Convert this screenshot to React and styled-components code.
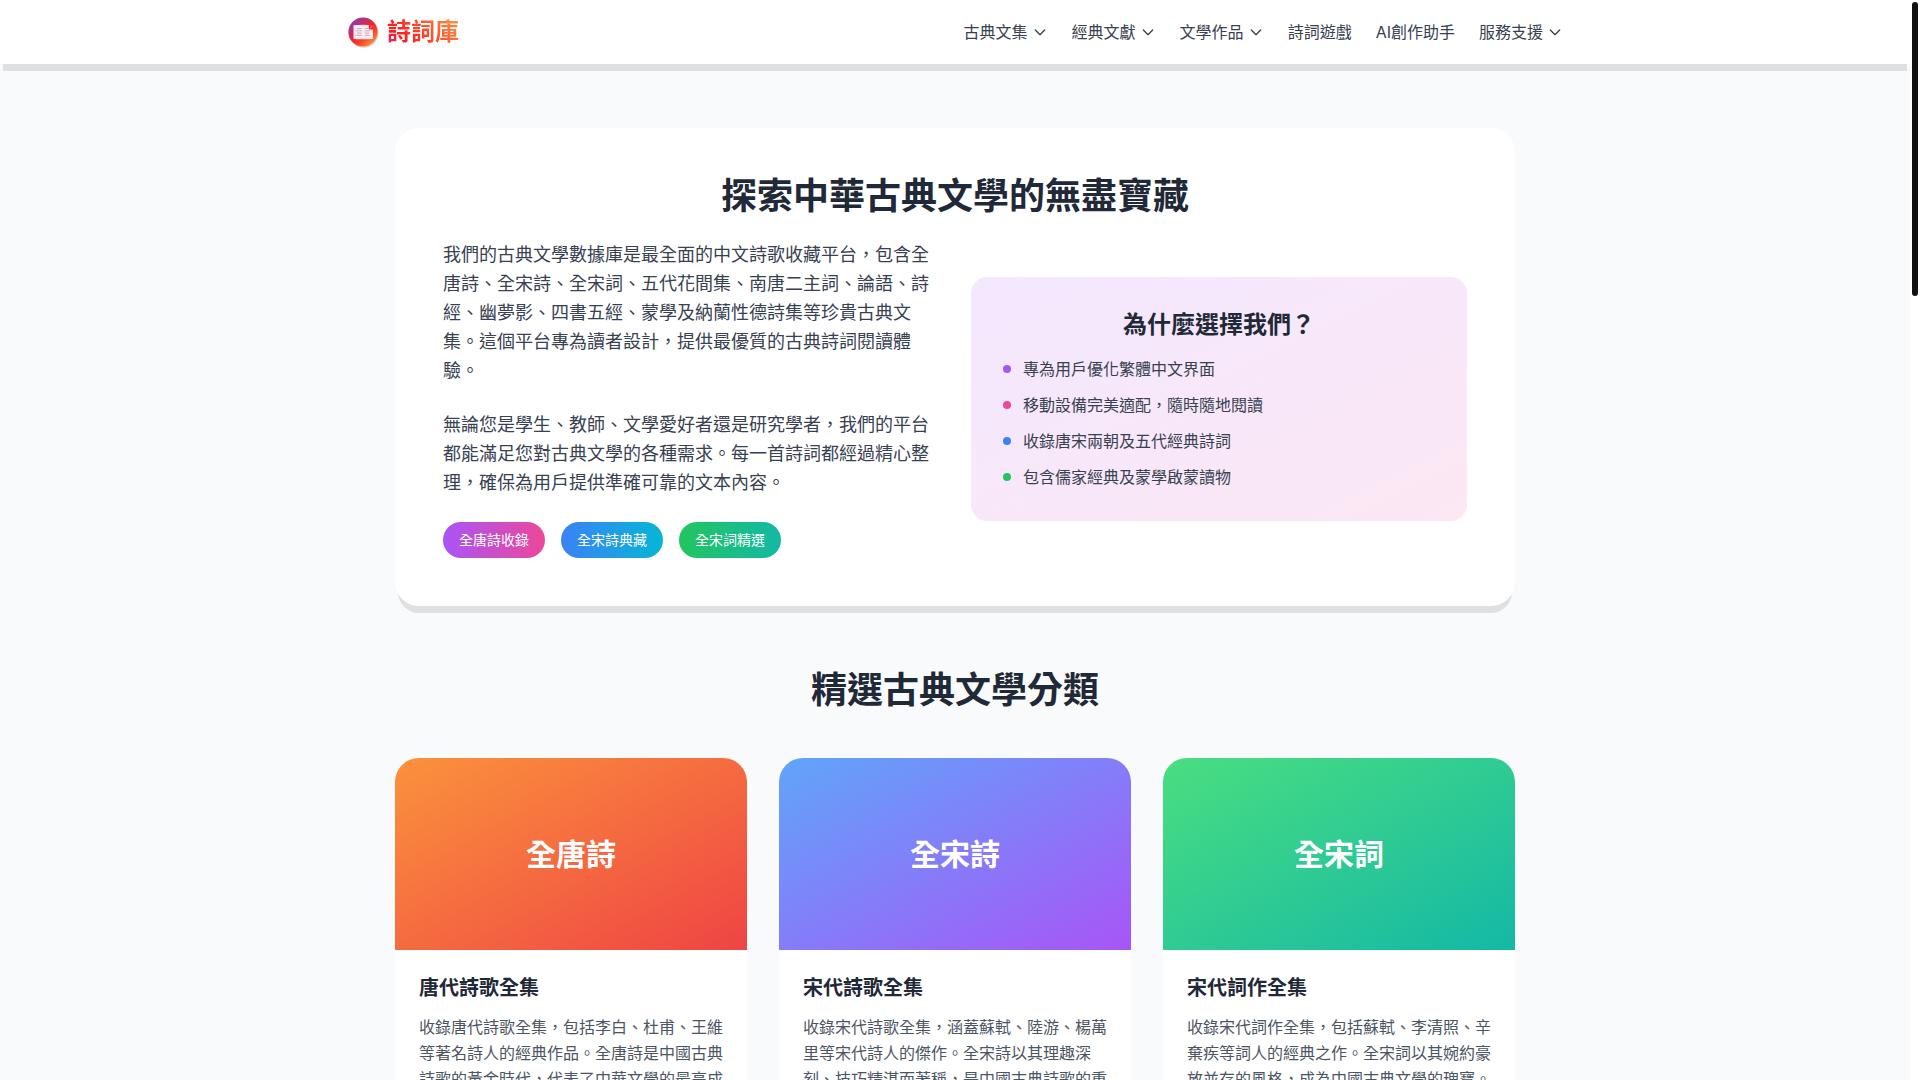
import React, { Fragment } from "react";
import styled, { createGlobalStyle } from "styled-components";

const GlobalStyle = createGlobalStyle`
  * {
    box-sizing: border-box;
    margin: 0;
    padding: 0;
  }

  body {
    background: #ffffff;
    color: #1f2937;
    font-family: Inter, "Noto Sans CJK TC", sans-serif;
    font-size: 16px;
    line-height: 24px;
  }

  ul {
    list-style: none;
  }
`;

const Shell = styled.div`
  display: flex;
  height: 100vh;
  overflow: hidden;
`;

const Page = styled.div`
  flex: 1;
  min-width: 0;
  overflow: hidden;
  background: #f9fafb;
`;

const ScrollTrack = styled.div`
  flex: none;
  width: 10px;
  padding: 2px;
  background: #ffffff;
`;

const ScrollThumb = styled.div`
  width: 6px;
  height: 294px;
  border-radius: 3px;
  background: #111111;
`;

const Header = styled.header`
  background: #ffffff;
  box-shadow: 0 10px 0 -3px rgba(0, 0, 0, 0.1);
`;

const HeaderInner = styled.div`
  display: flex;
  align-items: center;
  justify-content: space-between;
  max-width: 1280px;
  height: 64px;
  margin: 0 auto;
  padding: 0 32px;
`;

const Brand = styled.a`
  display: flex;
  align-items: center;
  gap: 8px;
  text-decoration: none;
`;

const BrandName = styled.span`
  font-size: 24px;
  line-height: 32px;
  font-weight: 700;
  color: transparent;
  background: linear-gradient(45deg, #c13584, #fd1d1d 25%, #ff9a44);
  background-clip: text;
  -webkit-background-clip: text;
`;

const Nav = styled.nav`
  display: flex;
  align-items: center;
  gap: 24px;
`;

const NavLink = styled.a`
  color: #374151;
  text-decoration: none;
`;

const NavButton = styled.button`
  display: flex;
  align-items: center;
  gap: 4px;
  border: 0;
  background: none;
  color: #374151;
  font: inherit;
  cursor: pointer;
`;

const Main = styled.main`
  max-width: 1184px;
  margin: 0 auto;
  padding: 64px 32px;
`;

const Hero = styled.section`
  padding: 48px;
  margin-bottom: 64px;
  border-radius: 24px;
  background: #ffffff;
  box-shadow: 0 10px 0 -3px rgba(0, 0, 0, 0.1);
`;

const Heading = styled.h2`
  margin-bottom: ${(props) => props.$gap};
  font-size: 36px;
  line-height: 40px;
  font-weight: 700;
  text-align: center;
`;

const HeroColumns = styled.div`
  display: grid;
  grid-template-columns: 1fr 1fr;
  align-items: center;
  gap: 32px;
`;

const Paragraph = styled.p`
  margin-bottom: 25px;
  color: #374151;
  font-size: 18px;
  line-height: 29px;
`;

const Tags = styled.div`
  display: flex;
  flex-wrap: wrap;
  gap: 16px;
`;

const Tag = styled.span`
  padding: 8px 16px;
  border-radius: 18px;
  background: linear-gradient(to right, ${(props) => props.$from}, ${(props) => props.$to});
  color: #ffffff;
  font-size: 14px;
  line-height: 20px;
`;

const Reasons = styled.div`
  padding: 32px;
  border-radius: 16px;
  background: linear-gradient(to bottom right, #f3e8ff, #fce7f3);
`;

const ReasonsTitle = styled.h3`
  margin-bottom: 16px;
  font-size: 24px;
  line-height: 32px;
  font-weight: 700;
  text-align: center;
`;

const ReasonList = styled.ul`
  display: grid;
  gap: 12px;
`;

const Reason = styled.li`
  display: flex;
  align-items: center;
  gap: 12px;
  color: #374151;

  &::before {
    content: "";
    width: 8px;
    height: 8px;
    border-radius: 50%;
    background: ${(props) => props.$dot};
  }
`;

const CardGrid = styled.div`
  display: grid;
  grid-template-columns: repeat(3, 1fr);
  gap: 32px;
`;

const Card = styled.article`
  overflow: hidden;
  border-radius: 24px;
  background: #ffffff;
  box-shadow: 0 10px 0 -3px rgba(0, 0, 0, 0.1);
`;

const CardCover = styled.div`
  display: flex;
  align-items: center;
  justify-content: center;
  height: 192px;
  background: linear-gradient(to bottom right, ${(props) => props.$from}, ${(props) => props.$to});
  color: #ffffff;
  font-size: 30px;
  line-height: 36px;
  font-weight: 700;
`;

const CardBody = styled.div`
  padding: 24px;
`;

const CardTitle = styled.h3`
  margin-bottom: 12px;
  font-size: 20px;
  line-height: 28px;
  font-weight: 700;
`;

const CardText = styled.p`
  color: #4b5563;
  line-height: 26px;
`;

const navItems = [
  { label: "古典文集", menu: true },
  { label: "經典文獻", menu: true },
  { label: "文學作品", menu: true },
  { label: "詩詞遊戲" },
  { label: "AI創作助手" },
  { label: "服務支援", menu: true },
];

const tags = [
  { label: "全唐詩收錄", from: "#a855f7", to: "#ec4899" },
  { label: "全宋詩典藏", from: "#3b82f6", to: "#06b6d4" },
  { label: "全宋詞精選", from: "#22c55e", to: "#14b8a6" },
];

const reasons = [
  { label: "專為用戶優化繁體中文界面", dot: "#a855f7" },
  { label: "移動設備完美適配，隨時隨地閱讀", dot: "#ec4899" },
  { label: "收錄唐宋兩朝及五代經典詩詞", dot: "#3b82f6" },
  { label: "包含儒家經典及蒙學啟蒙讀物", dot: "#22c55e" },
];

const categories = [
  {
    name: "全唐詩",
    title: "唐代詩歌全集",
    text: "收錄唐代詩歌全集，包括李白、杜甫、王維等著名詩人的經典作品。全唐詩是中國古典詩歌的黃金時代，代表了中華文學的最高成就。",
    from: "#fb923c",
    to: "#ef4444",
  },
  {
    name: "全宋詩",
    title: "宋代詩歌全集",
    text: "收錄宋代詩歌全集，涵蓋蘇軾、陸游、楊萬里等宋代詩人的傑作。全宋詩以其理趣深刻、技巧精湛而著稱，是中國古典詩歌的重要組成部分。",
    from: "#60a5fa",
    to: "#a855f7",
  },
  {
    name: "全宋詞",
    title: "宋代詞作全集",
    text: "收錄宋代詞作全集，包括蘇軾、李清照、辛棄疾等詞人的經典之作。全宋詞以其婉約豪放並存的風格，成為中國古典文學的瑰寶。",
    from: "#4ade80",
    to: "#14b8a6",
  },
];

function Chevron() {
  return (
    <svg width="16" height="16" viewBox="0 0 24 24" fill="none" aria-hidden="true">
      <path
        d="M19 9l-7 7-7-7"
        stroke="currentColor"
        strokeWidth="2"
        strokeLinecap="round"
        strokeLinejoin="round"
      />
    </svg>
  );
}

// open book on a round gradient badge, with a small seal in the corner
function Logo() {
  return (
    <svg width="32" height="32" viewBox="0 0 32 32" aria-hidden="true">
      <defs>
        <linearGradient id="badge" x1="0.15" y1="0.1" x2="0.85" y2="0.95">
          <stop offset="0" stopColor="#8a3ab0" />
          <stop offset="0.45" stopColor="#ee2335" />
          <stop offset="0.65" stopColor="#fb3a22" />
          <stop offset="1" stopColor="#ff9a3c" />
        </linearGradient>
      </defs>
      <circle cx="16.6" cy="16.8" r="15" fill="#000000" opacity="0.16" />
      <circle cx="16" cy="16" r="14.6" fill="url(#badge)" />
      <path
        d="M6.5 9.2Q16 8.400 26 9.200V23Q16 23.600 6.500 23Z"
        fill="#fdeaf0"
      />
      <path
        d="M10 12.500h4.500M8.700 14.800h6M10 17.100h4.500M8.700 19.400h6M18 12.500h3.500M17.700 14.800h5.300M18 17.100h4M17.700 19.400h5.300"
        stroke="#b3a5ac"
        strokeWidth="0.800"
      />
      <rect x="21.700" y="9" width="5" height="4.400" rx="1" fill="#f3263c" />
      <path d="M23.200 12.200l2-2" stroke="#ffd0d0" strokeWidth="0.800" />
    </svg>
  );
}

function App() {
  return (
    <Fragment>
      <GlobalStyle />
      <Shell>
        <Page>
          <Header>
            <HeaderInner>
              <Brand href="#">
                <Logo />
                <BrandName>詩詞庫</BrandName>
              </Brand>
              <Nav>
                {navItems.map(({ label, menu }) =>
                  menu ? (
                    <NavButton key={label} type="button">
                      {label}
                      <Chevron />
                    </NavButton>
                  ) : (
                    <NavLink key={label} href="#">
                      {label}
                    </NavLink>
                  )
                )}
              </Nav>
            </HeaderInner>
          </Header>

          <Main>
            <Hero>
              <Heading $gap="24px">探索中華古典文學的無盡寶藏</Heading>
              <HeroColumns>
                <div>
                  <Paragraph>
                    我們的古典文學數據庫是最全面的中文詩歌收藏平台，包含全唐詩、全宋詩、全宋詞、五代花間集、南唐二主詞、論語、詩經、幽夢影、四書五經、蒙學及納蘭性德詩集等珍貴古典文集。這個平台專為讀者設計，提供最優質的古典詩詞閱讀體驗。
                  </Paragraph>
                  <Paragraph>
                    無論您是學生、教師、文學愛好者還是研究學者，我們的平台都能滿足您對古典文學的各種需求。每一首詩詞都經過精心整理，確保為用戶提供準確可靠的文本內容。
                  </Paragraph>
                  <Tags>
                    {tags.map((tag) => (
                      <Tag key={tag.label} $from={tag.from} $to={tag.to}>
                        {tag.label}
                      </Tag>
                    ))}
                  </Tags>
                </div>
                <Reasons>
                  <ReasonsTitle>為什麼選擇我們？</ReasonsTitle>
                  <ReasonList>
                    {reasons.map((reason) => (
                      <Reason key={reason.label} $dot={reason.dot}>
                        {reason.label}
                      </Reason>
                    ))}
                  </ReasonList>
                </Reasons>
              </HeroColumns>
            </Hero>

            <Heading $gap="48px">精選古典文學分類</Heading>
            <CardGrid>
              {categories.map((item) => (
                <Card key={item.name}>
                  <CardCover $from={item.from} $to={item.to}>
                    {item.name}
                  </CardCover>
                  <CardBody>
                    <CardTitle>{item.title}</CardTitle>
                    <CardText>{item.text}</CardText>
                  </CardBody>
                </Card>
              ))}
            </CardGrid>
          </Main>
        </Page>
        <ScrollTrack>
          <ScrollThumb />
        </ScrollTrack>
      </Shell>
    </Fragment>
  );
}

export default App;
